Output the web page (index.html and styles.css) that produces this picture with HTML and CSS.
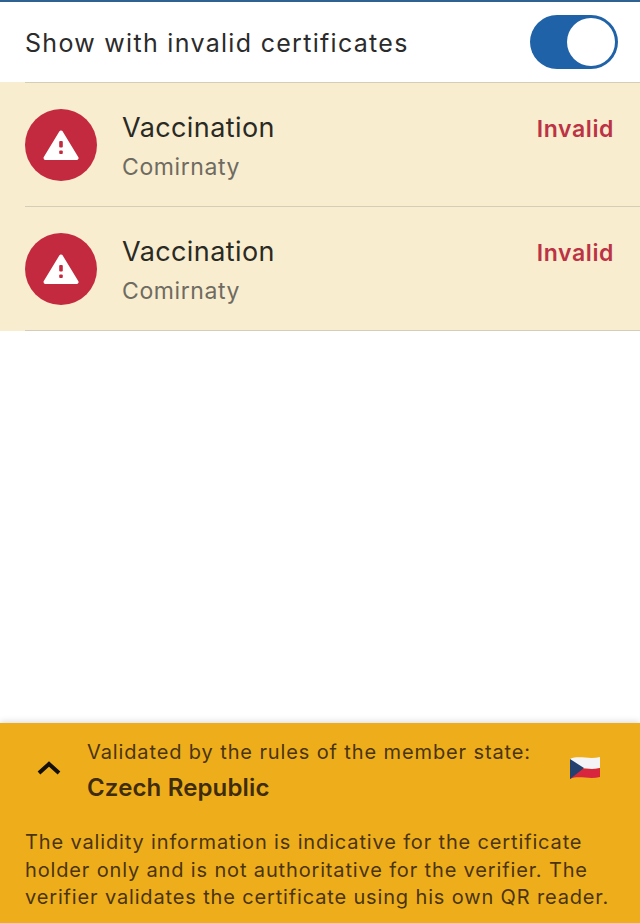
FILE: index.html
```html
<!DOCTYPE html>
<html lang="en">
<head>
  <meta charset="UTF-8">
  <meta name="viewport" content="width=device-width, initial-scale=1.0">
  <title>Certificates</title>
  <link rel="stylesheet" href="styles.css">
</head>
<body>
  <div class="page">
    <!-- Filter row -->
    <div class="filter-row">
      <span class="filter-label">Show with invalid certificates</span>
      <div class="switch"><div class="switch-knob"></div></div>
    </div>

    <!-- Certificate list -->
    <div class="cert-list">
      <div class="cert-row">
        <div class="cert-icon">
          <svg viewBox="0 0 36 30" width="36" height="30">
            <path class="warn-body" d="M18 2.5 L33.5 28 H2.5 Z"/>
            <rect class="warn-mark" x="16.2" y="11" width="3.6" height="6.5" rx="1"/>
            <rect class="warn-mark" x="16.2" y="20.5" width="3.6" height="3.6" rx="1"/>
          </svg>
        </div>
        <div class="cert-text">
          <div class="cert-title">Vaccination</div>
          <div class="cert-sub">Comirnaty</div>
        </div>
        <div class="cert-status">Invalid</div>
      </div>
      <div class="cert-row">
        <div class="cert-icon">
          <svg viewBox="0 0 36 30" width="36" height="30">
            <path class="warn-body" d="M18 2.5 L33.5 28 H2.5 Z"/>
            <rect class="warn-mark" x="16.2" y="11" width="3.6" height="6.5" rx="1"/>
            <rect class="warn-mark" x="16.2" y="20.5" width="3.6" height="3.6" rx="1"/>
          </svg>
        </div>
        <div class="cert-text">
          <div class="cert-title">Vaccination</div>
          <div class="cert-sub">Comirnaty</div>
        </div>
        <div class="cert-status">Invalid</div>
      </div>
    </div>

    <!-- Bottom panel -->
    <div class="rules-panel">
      <div class="rules-head">
        <svg class="chevron" viewBox="0 0 26 16" width="26" height="16">
          <path d="M3 13 L13 4 L23 13" />
        </svg>
        <div class="rules-text">
          <div class="rules-label">Validated by the rules of the member state:</div>
          <div class="rules-country">Czech Republic</div>
        </div>
        <svg class="flag" viewBox="0 0 32 24" width="32" height="24">
          <path fill="#f4f4f6" d="M1 3 C10 -1 20 4 31 1 V12 C20 15 10 10 1 13 Z"/>
          <path fill="#d7263d" d="M1 13 C10 10 20 15 31 12 V21 C20 24 10 19 1 23 Z"/>
          <path fill="#24406f" d="M1 3 L15 12 L1 23 Z"/>
        </svg>
      </div>
      <p class="rules-note">The validity information is indicative for the certificate holder only and is not authoritative for the verifier. The verifier validates the certificate using his own QR reader.</p>
    </div>
  </div>
</body>
</html>
```
FILE: styles.css
```css
/* Basic styling */
html, body {
  height: 100%;
}
body {
  margin: 0;
  background: #fff;
  font-family: Inter, "Noto Sans", sans-serif;
  color: #2b2b2b;
}
.page {
  height: 923px;
  overflow: hidden;
  display: flex;
  flex-direction: column;
  border-top: 2px solid #2f6191;
  box-sizing: border-box;
}

/* Filter row */
.filter-row {
  height: 80px;
  display: flex;
  align-items: center;
  justify-content: space-between;
  padding: 0 22px 0 25px;
}
.filter-label {
  font-size: 25px;
  line-height: 32px;
  padding-top: 2px;
  letter-spacing: 1.3px;
}
.switch {
  width: 88px;
  height: 54px;
  box-sizing: border-box;
  background: #1f62a8;
  border-radius: 27px;
  padding: 3px;
  display: flex;
  justify-content: flex-end;
}
.switch-knob {
  width: 48px;
  height: 48px;
  background: #fff;
  border-radius: 50%;
}

/* Certificate list */
.cert-list {
  background: #f9edd0;
  flex: 1 1 auto;
  align-self: stretch;
  max-height: 249px;
}
.cert-row {
  height: 124px;
  margin-left: 25px;
  box-sizing: border-box;
  border-top: 1px solid #d6cdb9;
  display: flex;
  align-items: flex-start;
  padding: 26px 26px 0 0;
}
.cert-row:last-child {
  height: 125px;
  border-bottom: 1px solid #d6cdb9;
}
.cert-icon {
  width: 72px;
  height: 72px;
  border-radius: 50%;
  background: #c42a3f;
  display: flex;
  align-items: center;
  justify-content: center;
  flex: none;
}
.warn-body {
  fill: #fff;
  stroke: #fff;
  stroke-width: 4;
  stroke-linejoin: round;
}
.warn-mark {
  fill: #c42a3f;
}
.cert-text {
  flex: 1;
  margin-left: 25px;
}
.cert-title {
  font-size: 27px;
  line-height: 36px;
  padding-top: 1px;
  letter-spacing: 0.4px;
  color: #2a2a24;
}
.cert-sub {
  font-size: 23px;
  line-height: 32px;
  margin-top: 5px;
  letter-spacing: 0.6px;
  color: #6e6b60;
}
.cert-status {
  font-size: 23px;
  line-height: 36px;
  padding-top: 2px;
  font-weight: 600;
  letter-spacing: 0.6px;
  color: #bb3344;
}

/* Bottom panel */
.rules-panel {
  margin-top: auto;
  height: 200px;
  box-sizing: border-box;
  background: #eeae1b;
  box-shadow: 0 -2px 6px rgba(0,0,0,0.12);
  padding: 14px 20px 0 25px;
  color: #4a3410;
}
.rules-head {
  display: flex;
  align-items: center;
}
.chevron {
  flex: none;
  margin: 0 0 8px 11px;
}
.chevron path {
  fill: none;
  stroke: #14100a;
  stroke-width: 4;
}
.rules-text {
  flex: 1;
  margin-left: 25px;
}
.rules-label {
  font-size: 20px;
  line-height: 30px;
  letter-spacing: 0.88px;
}
.rules-country {
  font-size: 24px;
  line-height: 36px;
  font-weight: 600;
  letter-spacing: 0.15px;
  color: #3e2c0c;
  margin-top: 3px;
}
.flag {
  flex: none;
  margin: 0 19px 8px 0;
}
.rules-note {
  margin: 23px 0 0;
  font-size: 20px;
  line-height: 27.5px;
  letter-spacing: 0.85px;
}
```
